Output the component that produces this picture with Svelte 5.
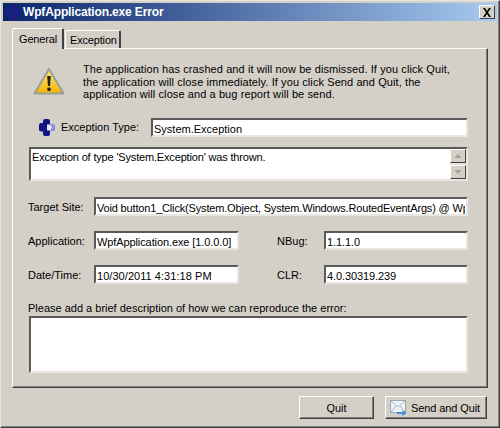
<script>
  const intro = 'The application has crashed and it will now be dismissed. If you click Quit, the application will close immediately. If you click Send and Quit, the application will close and a bug report will be send.';
</script>

<div class="window">
  <div class="titlebar">
    <svg class="app-icon" width="16" height="16" viewBox="0 0 16 17">
      <rect x="4" y="0" width="7" height="17" rx="2" fill="#1b1f7e" />
      <rect x="0" y="4" width="16" height="8.500" rx="2" fill="#1b1f7e" />
    </svg>
    <span class="title">WpfApplication.exe Error</span>
    <button class="close" aria-label="Close">
      <svg width="10" height="9" viewBox="0 0 10 9"><path d="M1 0h2l2 3 2-3h2L6 4.500 9 9H7L5 6 3 9H1l3-4.500z" fill="#000" /></svg>
    </button>
  </div>

  <div class="tabs">
    <div class="tab active">General</div>
    <div class="tab">Exception</div>
  </div>

  <div class="panel">
    <div class="intro">
      <svg class="warn" width="32" height="29" viewBox="0 0 32 29">
        <defs>
          <linearGradient id="warnfill" x1="0" y1="0" x2="0" y2="1">
            <stop offset="0" stop-color="#ffe97a" />
            <stop offset="1" stop-color="#f4b400" />
          </linearGradient>
        </defs>
        <path d="M16 2 30.500 26.500H1.500z" fill="url(#warnfill)" stroke="#9c9c98" stroke-width="2" stroke-linejoin="round" />
        <path d="M14.200 9h3.600l-.8 10h-2z" fill="#222" />
        <rect x="14.300" y="20.500" width="3.400" height="3.400" rx="1.200" fill="#222" />
      </svg>
      <p>{intro}</p>
    </div>

    <div class="type-row">
      <svg class="bug" width="16" height="17" viewBox="0 0 16 17">
        <rect x="4" y="0" width="7" height="17" rx="2" fill="#14147f" />
        <rect x="0" y="4" width="9" height="8.500" rx="2" fill="#14147f" />
        <rect x="10" y="5" width="6" height="7" rx="1.500" fill="#8f8fd6" />
        <path d="M8 5.500h3l2 3-2 3H8z" fill="#e8e8f4" />
      </svg>
      <label for="etype">Exception Type:</label>
      <input id="etype" class="grow" value="System.Exception" readonly />
    </div>

    <div class="message">
      <span>Exception of type 'System.Exception' was thrown.</span>
      <div class="scroll">
        <div class="arrow"><i class="up"></i></div>
        <div class="track"></div>
        <div class="arrow"><i class="down"></i></div>
      </div>
    </div>

    <div class="site-row">
      <label for="site">Target Site:</label>
      <input id="site" class="grow" value="Void button1_Click(System.Object, System.Windows.RoutedEventArgs) @ WpfApplication.exe" readonly />
    </div>

    <div class="info-row first">
      <label for="app">Application:</label>
      <input id="app" class="half" value="WpfApplication.exe [1.0.0.0]" readonly />
      <label class="right-label" for="nbug">NBug:</label>
      <input id="nbug" class="grow" value="1.1.1.0" readonly />
    </div>

    <div class="info-row">
      <label for="date">Date/Time:</label>
      <input id="date" class="half" value="10/30/2011 4:31:18 PM" readonly />
      <label class="right-label" for="clr">CLR:</label>
      <input id="clr" class="grow" value="4.0.30319.239" readonly />
    </div>

    <label class="desc-label" for="desc">Please add a brief description of how we can reproduce the error:</label>
    <textarea id="desc"></textarea>
  </div>

  <div class="footer">
    <button class="btn quit">Quit</button>
    <button class="btn send">
      <svg width="18" height="16" viewBox="0 0 18 16">
        <rect x="0.500" y="0.500" width="15" height="12" fill="#eef3f8" stroke="#9aa6b2" />
        <path d="M1 1l7 6 7-6M1 12l5-6M15 12l-5-6" fill="none" stroke="#a9b4c0" />
        <path d="M7 12h5.500V10l4 3-4 3v-2H7z" fill="#3d8fd8" />
      </svg>
      <span>Send and Quit</span>
    </button>
  </div>
</div>

<style>
  :global(body) {
    background: #d4d0c8;
  }

  .window {
    box-sizing: border-box;
    width: 500px;
    height: 428px;
    padding: 2px;
    background: #d4d0c8;
    border: 1px solid;
    border-color: #e8e6e0 #404040 #404040 #e8e6e0;
    box-shadow: inset -1px -1px 0 #808080;
    font: 11px/13px "Liberation Sans", Arial, sans-serif;
    letter-spacing: -0.17px;
    color: #000;
    display: flex;
    flex-direction: column;
  }

  .titlebar {
    height: 18px;
    flex: none;
    display: flex;
    align-items: center;
    padding: 0 2px;
    background: linear-gradient(to right, #0a246a, #a6caf0);
  }

  .app-icon {
    flex: none;
  }

  .title {
    margin-left: 2px;
    flex: 1;
    color: #fff;
    font: bold 12px "Liberation Sans", Arial, sans-serif;
    letter-spacing: -0.15px;
    white-space: nowrap;
  }

  .close {
    width: 16px;
    height: 14px;
    padding: 0;
    display: flex;
    align-items: center;
    justify-content: center;
    background: #d4d0c8;
    border: 1px solid;
    border-color: #fff #404040 #404040 #fff;
  }

  .tabs {
    display: flex;
    align-items: flex-end;
    height: 27px;
    flex: none;
    margin-left: 9px;
  }

  .tab {
    box-sizing: border-box;
    width: 56px;
    height: 18px;
    padding: 3px 0 0 4px;
    margin-left: 1px;
    border: 1px solid #fff;
    border-right: 2px solid #404040;
    border-bottom: 0;
    border-radius: 2px 2px 0 0;
  }

  .tab.active {
    position: relative;
    z-index: 1;
    height: 21px;
    width: 52px;
    margin: 0 0 -1px;
    padding: 4px 0 0 6px;
    background: #d4d0c8;
  }

  .panel {
    box-sizing: border-box;
    height: 340px;
    flex: none;
    margin: 0 9px;
    padding: 15px 19px 0 16px;
    border: 1px solid;
    border-color: #fff #404040 #404040 #fff;
    box-shadow: inset -1px -1px 0 #808080;
    display: flex;
    flex-direction: column;
  }

  .intro {
    display: flex;
    height: 37px;
    padding-left: 4px;
  }

  .warn {
    flex: none;
    margin-top: 3px;
  }

  .intro p {
    margin: -1px 0 0 18px;
    width: 376px;
    line-height: 12.500px;
    letter-spacing: 0.09px;
  }

  input,
  textarea {
    box-sizing: border-box;
    height: 19px;
    min-width: 0;
    margin: 0;
    padding: 2px 1px 0;
    background: #fff;
    border: 2px solid;
    border-color: #5a5a5a #e8e6e0 #e8e6e0 #5a5a5a;
    border-radius: 0;
    outline: none;
    font: 11px "Liberation Sans", Arial, sans-serif;
    letter-spacing: -0.1px;
    color: #000;
  }

  #etype {
    letter-spacing: 0;
  }

  #site {
    letter-spacing: -0.17px;
  }

  #date {
    letter-spacing: 0.05px;
  }

  .grow {
    flex: 1;
  }

  .half {
    width: 145px;
    flex: none;
  }

  label {
    white-space: nowrap;
    letter-spacing: 0;
  }

  .type-row,
  .site-row,
  .info-row {
    display: flex;
    align-items: center;
  }

  .type-row {
    margin: 17px 0 0 10px;
  }

  .type-row label {
    margin-left: 6px;
    width: 90px;
  }

  .bug {
    flex: none;
  }

  .message {
    box-sizing: border-box;
    height: 34px;
    margin-top: 10px;
    display: flex;
    justify-content: space-between;
    background: #fff;
    border: 2px solid;
    border-color: #5a5a5a #e8e6e0 #e8e6e0 #5a5a5a;
    padding-left: 1px;
  }

  .message span {
    margin-top: 2px;
  }

  .scroll {
    flex: none;
    width: 16px;
    background: #e4e2dc;
    display: flex;
    flex-direction: column;
  }

  .track {
    flex: 1;
  }

  .arrow {
    box-sizing: border-box;
    height: 14px;
    display: flex;
    align-items: center;
    justify-content: center;
    background: #d4d0c8;
    border: 1px solid;
    border-color: #fff #404040 #404040 #fff;
  }

  .arrow i {
    width: 0;
    height: 0;
    border-left: 4px solid transparent;
    border-right: 4px solid transparent;
  }

  .arrow .up {
    border-bottom: 4px solid #a8a49c;
  }

  .arrow .down {
    border-top: 4px solid #a8a49c;
  }

  .site-row {
    margin-top: 16px;
  }

  .site-row label,
  .info-row label:first-child {
    width: 66px;
    margin-left: -1px;
    padding-top: 2px;
    flex: none;
  }

  .info-row {
    margin-top: 15px;
  }

  .right-label {
    margin-left: 38px;
    width: 47px;
    padding-top: 2px;
    flex: none;
  }

  .desc-label {
    margin: 17px 0 0 -1px;
    line-height: 14px;
  }

  textarea {
    height: 57px;
    flex: none;
    resize: none;
    margin-top: 1px;
    display: block;
  }

  .footer {
    display: flex;
    justify-content: flex-end;
    gap: 11px;
    margin: 8px 10px 0 0;
  }

  .btn {
    box-sizing: border-box;
    height: 23px;
    padding: 0;
    display: flex;
    align-items: center;
    justify-content: center;
    background: #d4d0c8;
    border: 1px solid;
    border-color: #fff #404040 #404040 #fff;
    box-shadow: inset -1px -1px 0 #808080;
    font: 11px "Liberation Sans", Arial, sans-serif;
    letter-spacing: -0.1px;
    color: #000;
  }

  .quit {
    width: 75px;
  }

  .send {
    width: 102px;
    justify-content: flex-start;
    padding-left: 4px;
    gap: 3px;
    white-space: nowrap;
  }
</style>
